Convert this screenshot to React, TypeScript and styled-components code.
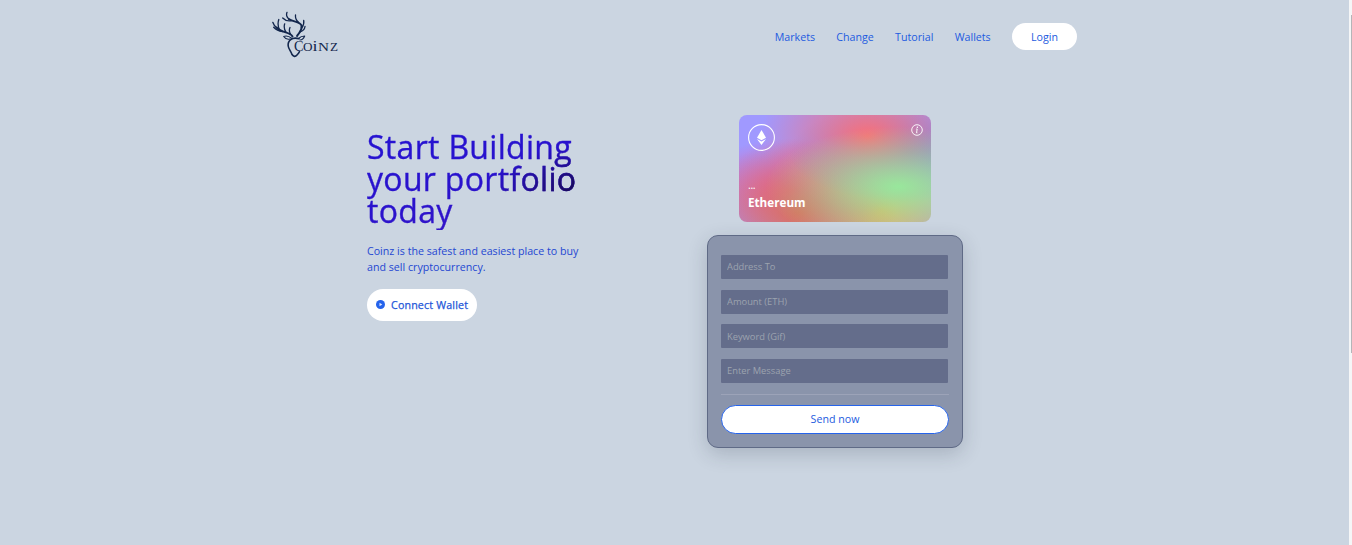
import React from "react";
import styled, { createGlobalStyle } from "styled-components";

const GlobalStyle = createGlobalStyle`
  * { box-sizing: border-box; }
  body {
    margin: 0;
    overflow: hidden;
    background: #cbd5e1;
    font-family: "Open Sans", "Noto Sans", sans-serif;
    font-size: 10.67px;
    line-height: 16px;
    color: #1d4ed8;
  }
  button, input { font-family: inherit; }
`;

const Shell = styled.div`
  display: flex;
  height: 545px;
`;

const Page = styled.div`
  flex: 1;
  display: flex;
  flex-direction: column;
`;

const ScrollTrack = styled.div`
  width: 3px;
  padding: 15px 0 0 2px;
  background: #f5f6f7;
`;

const ScrollThumb = styled.div`
  height: 338px;
  background: #b4b5b8;
`;

const Header = styled.header`
  display: flex;
  justify-content: space-between;
  width: 805px;
  height: 73px;
  margin-left: 272px;
`;

const Logo = styled.svg`
  display: block;
  width: 72px;
  height: 50px;
  margin-top: 10px;
`;

const Nav = styled.nav`
  display: flex;
  align-items: center;
  gap: 21.3px;
`;

const NavLink = styled.a`
  color: #1d5be0;
  white-space: nowrap;
`;

const LoginButton = styled.button`
  width: 65px;
  height: 27px;
  padding: 0;
  border: 0;
  border-radius: 14px;
  background: #fff;
  color: #1d5be0;
  font-size: 10.67px;
`;

const Main = styled.main`
  display: flex;
  align-items: flex-start;
  padding-left: 367px;
`;

const Intro = styled.section`
  width: 227px;
  margin: 58px 113px 0 0;
`;

const Title = styled.h1`
  margin: 0;
  padding-bottom: 3px;
  font-size: 32px;
  line-height: 32px;
  font-weight: 400;
  letter-spacing: 0.31px;
  white-space: nowrap;
  color: transparent;
  -webkit-text-stroke: 0.35px transparent;
  background: radial-gradient(ellipse 105px 48px at 100% 62%, #0f0a3c 0%, #1c0b68 30%, rgba(42, 18, 204, 0) 100%),
    linear-gradient(165deg, #2512d2 0%, #2a12cc 55%, #4018c4 100%);
  -webkit-background-clip: text;
  background-clip: text;
`;

const Lead = styled.p`
  margin: 13px 0 14px;
  color: #2447d2;
`;

const WalletButton = styled.button`
  display: flex;
  align-items: center;
  gap: 6px;
  width: 110px;
  height: 32px;
  padding: 0 0 0 9px;
  border: 0;
  border-radius: 16px;
  background: #fff;
  color: #1d55d8;
  font-size: 10.67px;
  letter-spacing: 0.17px;
  -webkit-text-stroke: 0.25px #1d55d8;
  white-space: nowrap;
`;

const PlayIcon = styled.svg`
  flex: none;
  width: 9px;
  height: 9px;
  margin-top: -2px;
`;

const Transfer = styled.section`
  display: flex;
  flex-direction: column;
  align-items: center;
  width: 256px;
  padding-top: 42px;
`;

const CryptoCard = styled.div`
  display: flex;
  flex-direction: column;
  justify-content: space-between;
  width: 192px;
  height: 107px;
  padding: 9px 8px 11px 9px;
  border-radius: 8px;
  color: #fff;
  background-color: #a099ff;
  background-image: radial-gradient(at 83% 67%, rgb(152, 231, 156) 0, transparent 59%),
    radial-gradient(at 67% 20%, hsla(357, 94%, 71%, 1) 0, transparent 59%),
    radial-gradient(at 88% 35%, hsla(222, 81%, 65%, 1) 0, transparent 50%),
    radial-gradient(at 31% 91%, hsla(9, 61%, 61%, 1) 0, transparent 52%),
    radial-gradient(at 27% 71%, hsla(336, 91%, 65%, 1) 0, transparent 49%),
    radial-gradient(at 74% 89%, hsla(30, 98%, 65%, 1) 0, transparent 51%),
    radial-gradient(at 53% 75%, hsla(174, 94%, 68%, 1) 0, transparent 45%);
`;

const CardTop = styled.div`
  display: flex;
  justify-content: space-between;
`;

const CoinBadge = styled.svg`
  width: 27px;
  height: 27px;
`;

const InfoIcon = styled.svg`
  width: 12px;
  height: 12px;
`;

const CardAddress = styled.div`
  margin-bottom: 2px;
  font-size: 10.67px;
  line-height: 14px;
  letter-spacing: -0.4px;
`;

const CardName = styled.div`
  font-size: 11.7px;
  line-height: 17px;
  font-weight: 700;
`;

const Form = styled.form`
  width: 256px;
  height: 213px;
  margin-top: 13px;
  padding: 19px 13px 13px;
  border: 1px solid #5f6a86;
  border-radius: 11px;
  background: #8a94ab;
  box-shadow: 0 6px 20px rgba(31, 38, 60, 0.2);
`;

const Field = styled.input`
  display: block;
  width: 227px;
  height: 24px;
  margin: 0 0 10.67px;
  padding: 0 6px 0.5px;
  border: 0;
  border-radius: 1px;
  background: #646d8b;
  color: #fff;
  font-size: 9.33px;
  &::placeholder { color: #9ca3af; opacity: 1; }
`;

const Divider = styled.div`
  height: 1px;
  margin-bottom: 10.5px;
  background: #9ca3b8;
`;

const SendButton = styled.button`
  display: block;
  width: 228px;
  height: 29px;
  padding: 0 0 1px;
  border: 1px solid #2563eb;
  border-radius: 15px;
  background: #fff;
  color: #1d5be0;
  font-size: 10.67px;
`;

const navItems = ["Markets", "Change", "Tutorial", "Wallets"];
const fields = ["Address To", "Amount (ETH)", "Keyword (Gif)", "Enter Message"];

function DeerLogo() {
  return (
    <Logo viewBox="0 0 72 50" fill="none" stroke="#12264c" strokeLinecap="round" strokeLinejoin="round">
      <g strokeWidth="1.900">
        <path d="M20.500 26.500C18 21.500 10 23.500 4.500 17.500" />
        <path d="M25 26C27 22.500 30.500 21 29.500 15.500C27.500 11 22 12.500 16.800 9" />
      </g>
      <g strokeWidth="1.300">
        <path d="M4.500 17.500Q1.800 15.500 .8 12.300M7.500 19.800Q5 14.500 6.800 9.500M10.500 21.500Q5 21 1.700 17.300M14 22.300Q11.300 18 12.700 13.800M18.500 24Q16.500 20.500 18 17.500" />
        <path d="M16.800 9Q13.500 6 15 2.300M19 10.800Q14 11.500 10.700 8M26.500 12.300Q23 9.500 23.500 5M29.700 18Q32.500 14.500 31.700 10.500M28 22Q32.500 20.500 33 16.500" />
      </g>
      <path d="M20 28.500Q15.500 25 11.700 26.500Q14 30 18 29M26.500 28.500Q29 26 32.700 26Q31 30 28 30" strokeWidth="1.100" />
      <path d="M27 28.800C20 26.500 15.500 31 16.200 36C16.700 39.500 19 41 20 44.500Q22.500 48 25 45Q27 43 27.500 41.500" strokeWidth="1.600" />
      <g fill="#12264c" stroke="none" fontFamily='"Liberation Serif", serif'>
        <text x="22" y="40.700" fontSize="15.500" textLength="9.500" lengthAdjust="spacingAndGlyphs">C</text>
        <text x="31" y="40.700" fontSize="13" textLength="9.500" lengthAdjust="spacingAndGlyphs">O</text>
        <text x="40.500" y="40.700" fontSize="15" textLength="5" lengthAdjust="spacingAndGlyphs">i</text>
        <text x="46" y="40.700" fontSize="13" textLength="11" lengthAdjust="spacingAndGlyphs">N</text>
        <text x="58" y="40.700" fontSize="13" textLength="8" lengthAdjust="spacingAndGlyphs">Z</text>
      </g>
    </Logo>
  );
}

export default function App() {
  return (
    <>
      <GlobalStyle />
      <Shell>
        <Page>
          <Header>
            <DeerLogo />
            <Nav>
              {navItems.map((item) => (
                <NavLink key={item}>{item}</NavLink>
              ))}
              <LoginButton>Login</LoginButton>
            </Nav>
          </Header>
          <Main>
            <Intro>
              <Title>
                Start Building
                <br />
                your portfolio
                <br />
                today
              </Title>
              <Lead>
                Coinz is the safest and easiest place to buy
                <br />
                and sell cryptocurrency.
              </Lead>
              <WalletButton>
                <PlayIcon viewBox="0 0 9 9">
                  <circle cx="4.500" cy="4.500" r="4.500" fill="#2563eb" />
                  <path d="M3.500 2.700L6.300 4.500L3.500 6.300Z" fill="#dfe9ff" />
                </PlayIcon>
                Connect Wallet
              </WalletButton>
            </Intro>
            <Transfer>
              <CryptoCard>
                <CardTop>
                  <CoinBadge viewBox="0 0 27 27">
                    <circle cx="13.500" cy="13.500" r="12.900" fill="none" stroke="#fff" strokeWidth="1.100" />
                    <path d="M13.500 6L18 13.700L13.500 16.300L9 13.700Z" fill="#fff" />
                    <path d="M9 14.900L13.500 17.500L18 14.900L13.500 21Z" fill="#fff" />
                  </CoinBadge>
                  <InfoIcon viewBox="0 0 12 12">
                    <circle cx="6" cy="6" r="5.300" fill="none" stroke="#fff" strokeWidth=".9" />
                    <path d="M5.200 5H6.200L5.500 8.800H6.400" fill="none" stroke="#fff" strokeWidth=".9" />
                    <circle cx="6.400" cy="3.200" r=".75" fill="#fff" />
                  </InfoIcon>
                </CardTop>
                <div>
                  <CardAddress>...</CardAddress>
                  <CardName>Ethereum</CardName>
                </div>
              </CryptoCard>
              <Form>
                {fields.map((field) => (
                  <Field key={field} placeholder={field} />
                ))}
                <Divider />
                <SendButton type="button">Send now</SendButton>
              </Form>
            </Transfer>
          </Main>
        </Page>
        <ScrollTrack>
          <ScrollThumb />
        </ScrollTrack>
      </Shell>
    </>
  );
}
